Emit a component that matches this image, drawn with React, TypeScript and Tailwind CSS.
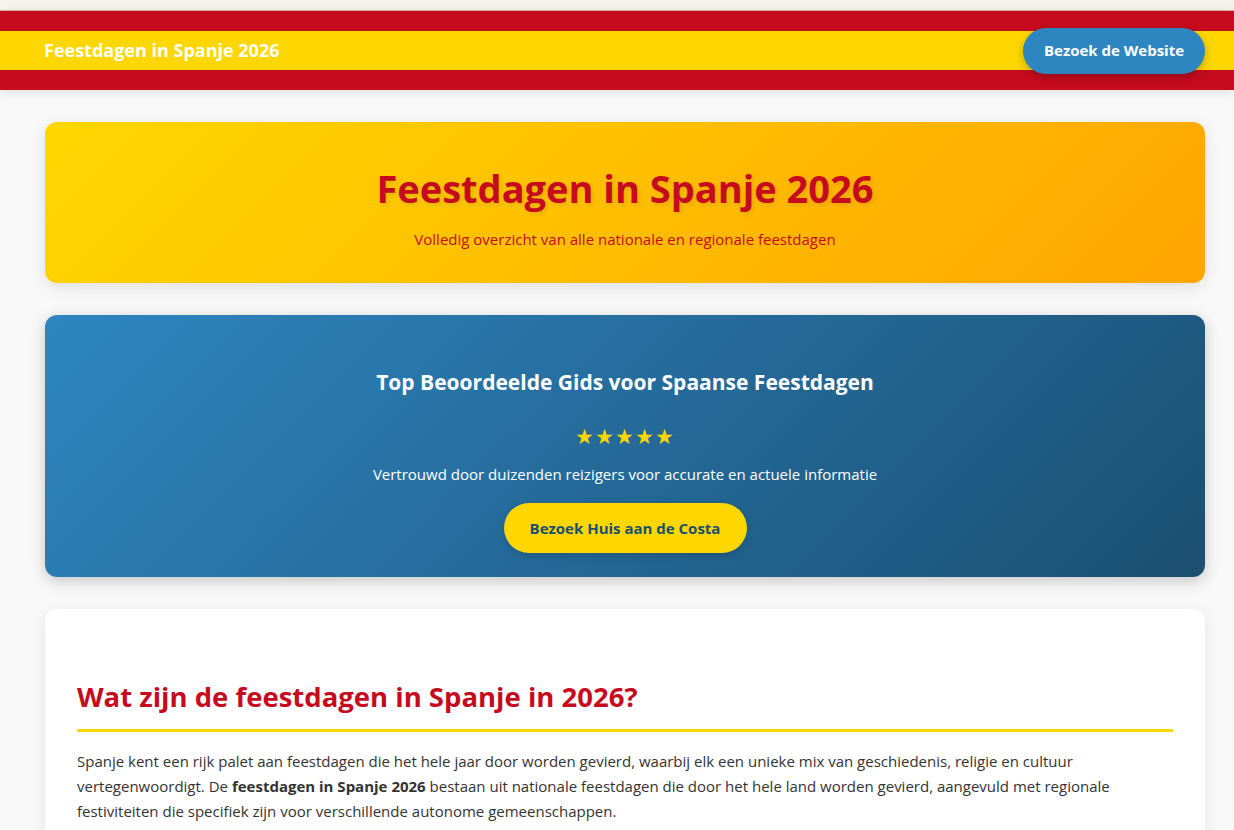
import React from "react";

const font = { fontFamily: '"Open Sans", "Noto Sans", sans-serif' };

export default function App() {
  return (
    <div className="min-h-[830px] bg-[#f8f8f8] text-[#333]" style={font}>
      <div className="h-[11px] bg-[#f5f3ec] border-b border-[#d8b4a8]" />
      <header className="h-[79px] bg-[linear-gradient(to_bottom,#c60b1e_0px,#c60b1e_20px,#ffd700_20px,#ffd700_59px,#c60b1e_59px)] shadow-[0_2px_10px_rgba(0,0,0,0.1)]">
        <div className="ml-[44px] mr-[29px] flex h-full items-center justify-between">
          <div className="text-[18px] font-bold text-white">Feestdagen in Spanje 2026</div>
          <a className="flex h-[46px] w-[182px] items-center justify-center rounded-full bg-[#2e86c1] text-[15px] font-bold text-white shadow-[0_3px_8px_rgba(0,0,0,0.25)]">
            Bezoek de Website
          </a>
        </div>
      </header>
      <main className="ml-[45px] mr-[29px] flex flex-col gap-[32px] pt-[32px]">
        <section className="flex h-[161px] flex-col items-center justify-center rounded-[12px] bg-[linear-gradient(135deg,#ffd700,#ffa500)] pt-[10px] shadow-[0_4px_15px_rgba(0,0,0,0.1)]">
          <h1 className="text-[38px] font-bold leading-tight text-[#c60b1e] [text-shadow:2px_2px_4px_rgba(0,0,0,0.1)]">
            Feestdagen in Spanje 2026
          </h1>
          <p className="mt-[16px] text-[15px] text-[#c60b1e]">Volledig overzicht van alle nationale en regionale feestdagen</p>
        </section>
        <section className="flex h-[262px] flex-col items-center rounded-[12px] bg-[linear-gradient(135deg,#2e86c1,#1b4f72)] pt-[52px] text-white shadow-[0_4px_15px_rgba(0,0,0,0.2)]">
          <h2 className="text-[21px] font-bold leading-[30px]">Top Beoordeelde Gids voor Spaanse Feestdagen</h2>
          <div className="mt-[27px] text-[21px] leading-[24px] tracking-[1px] text-[#ffd700]">★★★★★</div>
          <p className="mt-[15px] text-[15px] leading-[22px]">Vertrouwd door duizenden reizigers voor accurate en actuele informatie</p>
          <a className="mt-[18px] flex h-[50px] w-[243px] items-center justify-center rounded-full bg-[#ffd700] text-[15px] font-bold text-[#1b4f72] shadow-[0_3px_8px_rgba(0,0,0,0.15)]">
            Bezoek Huis aan de Costa
          </a>
        </section>
        <section className="rounded-[12px] bg-white px-[32px] pt-[70px] pb-[30px] shadow-[0_4px_15px_rgba(0,0,0,0.08)]">
          <h2 className="border-b-[3px] border-[#ffd700] pb-[14px] text-[27.5px] font-bold leading-[36px] text-[#c60b1e]">
            Wat zijn de feestdagen in Spanje in 2026?
          </h2>
          <p className="mt-[17px] text-[15px] leading-[25px] text-[#333]">
            Spanje kent een rijk palet aan feestdagen die het hele jaar door worden gevierd, waarbij elk een unieke mix van geschiedenis, religie en cultuur vertegenwoordigt. De <strong>feestdagen in Spanje 2026</strong> bestaan uit nationale feestdagen die door het hele land worden gevierd, aangevuld met regionale festiviteiten die specifiek zijn voor verschillende autonome gemeenschappen.
          </p>
        </section>
      </main>
    </div>
  );
}
